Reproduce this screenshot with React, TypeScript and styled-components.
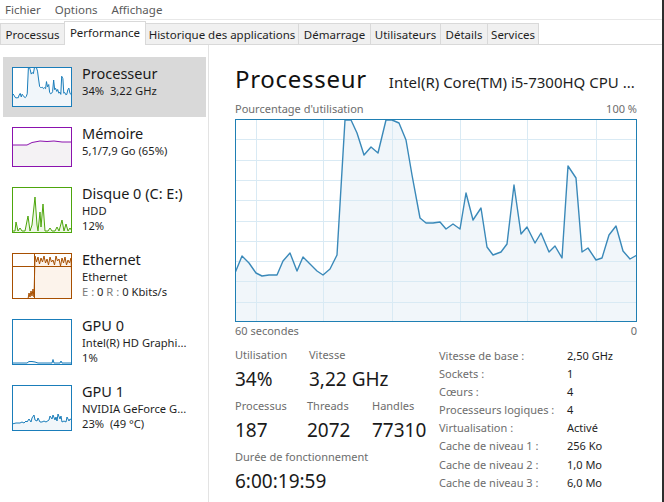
import React from "react";
import styled, { createGlobalStyle } from "styled-components";

const GlobalStyle = createGlobalStyle`
  html, body { margin: 0; padding: 0; background: #fff; }
  body { font-family: "Segoe UI", "Noto Sans", sans-serif; color: #1e1e1e; }
`;

const Window = styled.div`
  width: 664px;
  height: 502px;
  box-sizing: border-box;
  border-right: 2px solid #2e2e2e;
  display: flex;
  flex-direction: column;
  overflow: hidden;
  background: #fff;
`;

const MenuBar = styled.div`
  height: 19px;
  display: flex;
  align-items: center;
  gap: 14px;
  padding-left: 5px;
  border-bottom: 1px solid #e8e8e8;
  font-size: 11.5px;
  color: #5a5a5a;
`;

const TabStrip = styled.div`
  height: 24px;
  display: flex;
  align-items: flex-end;
  border-bottom: 1px solid #d9d9d9;
`;

const Tab = styled.div<{ $w: number; $active?: boolean }>`
  width: ${(p) => p.$w}px;
  height: ${(p) => (p.$active ? 24 : 21)}px;
  margin-bottom: ${(p) => (p.$active ? -1 : 0)}px;
  margin-right: -1px;
  box-sizing: border-box;
  display: flex;
  align-items: center;
  justify-content: center;
  padding-bottom: ${(p) => (p.$active ? 2 : 0)}px;
  border: 1px solid #d9d9d9;
  border-bottom: none;
  background: ${(p) => (p.$active ? "#fff" : "#f0f0f0")};
  position: relative;
  z-index: ${(p) => (p.$active ? 1 : 0)};
  font-size: 11.5px;
  color: #1e1e1e;
  white-space: nowrap;
`;

const Body = styled.div`
  flex: 1;
  display: flex;
  min-height: 0;
`;

const Sidebar = styled.div`
  width: 209px;
  flex: none;
  box-sizing: border-box;
  border-right: 1px solid #e3e3e3;
  padding-top: 12px;
`;

const SideItem = styled.div<{ $selected?: boolean }>`
  display: flex;
  gap: 10px;
  margin: 0 2px 0 3px;
  padding: 10px 0 10px 9px;
  background: ${(p) => (p.$selected ? "#d9d9d9" : "transparent")};
`;

const SideText = styled.div`
  display: flex;
  flex-direction: column;
  margin-top: -3px;
  white-space: nowrap;
`;

const SideTitle = styled.div`
  font-size: 14.5px;
  line-height: 19px;
  color: #1a1a1a;
`;

const SideSub = styled.div`
  font-size: 11.2px;
  line-height: 15px;
  color: #1e1e1e;
`;

const Dim = styled.span`
  color: #7a7a7a;
`;

const Main = styled.div`
  flex: 1;
  padding: 19px 0 0 26px;
  display: flex;
  flex-direction: column;
`;

const Header = styled.div`
  display: flex;
  align-items: baseline;
  gap: 22px;
  width: 402px;
  height: 30px;
  margin-bottom: 8px;
  white-space: nowrap;
`;

const BigTitle = styled.div`
  font-size: 24px;
  line-height: 30px;
  letter-spacing: 0.7px;
  color: #111;
`;

const CpuName = styled.div`
  font-size: 15px;
  color: #1e1e1e;
`;

const AxisRow = styled.div`
  width: 402px;
  display: flex;
  justify-content: space-between;
  font-size: 11px;
  line-height: 14px;
  color: #6d6d6d;
`;

const ChartWrap = styled.div`
  width: 402px;
  height: 203px;
  margin: 3px 0 2px;
`;

const Stats = styled.div`
  display: flex;
  margin-top: 9px;
`;

const LeftStats = styled.div`
  width: 204px;
  display: flex;
  flex-direction: column;
  gap: 6px;
`;

const StatRow = styled.div`
  display: flex;
`;

const Stat = styled.div<{ $w?: number }>`
  width: ${(p) => (p.$w ? `${p.$w}px` : "auto")};
  display: flex;
  flex-direction: column;
  white-space: nowrap;
`;

const StatLabel = styled.div`
  font-size: 11px;
  line-height: 16px;
  color: #6d6d6d;
`;

const StatValue = styled.div`
  font-size: 19px;
  line-height: 26px;
  margin-top: 3px;
  color: #1a1a1a;
`;

const InfoTable = styled.div`
  display: grid;
  grid-template-columns: 128px auto;
  align-content: start;
  row-gap: 2.1px;
  margin-top: 1px;
  font-size: 11px;
  line-height: 16px;
`;

const InfoLabel = styled.div`
  color: #6d6d6d;
  white-space: nowrap;
`;

const InfoValue = styled.div`
  color: #1e1e1e;
`;

type Pt = [number, number];

const mainScreen: Pt[] = [
  [236, 273], [243, 256], [250, 263], [257, 273], [263, 276], [270, 275], [278, 275], [284, 261],
  [291, 253], [298, 271], [304, 257], [311, 264], [318, 271], [324, 275], [331, 269], [338, 255],
  [346, 120], [352, 120], [358, 133], [365, 155], [372, 147], [379, 153], [387, 120], [393, 120],
  [400, 123], [407, 140], [413, 175], [421, 218], [427, 223], [434, 223], [441, 222], [447, 229],
  [454, 224], [461, 229], [467, 193], [474, 220], [482, 208], [488, 247], [494, 255], [502, 252],
  [508, 244], [515, 185], [522, 234], [528, 227], [536, 243], [542, 233], [550, 252], [556, 246],
  [563, 258], [569, 166], [577, 178], [583, 252], [589, 248], [597, 260], [603, 258], [610, 235],
  [617, 226], [624, 251], [631, 259], [638, 255],
];

const mainPts: Pt[] = mainScreen.map(([x, y]) => [x - 236, y - 119]);

const cpuThumb: Pt[] = mainPts.map(([x, y]) => [(x / 402) * 60, (y / 203) * 40]);

const memThumb: Pt[] = [[0, 18], [15, 18], [20, 15.5], [28, 14], [35, 14.5], [42, 14], [50, 15], [60, 15]];

const diskThumb: Pt[] = [
  [0, 44], [3, 44], [4, 35], [6, 44], [8, 41], [10, 44], [13, 44], [16, 29], [18, 44], [20, 38],
  [23, 10], [25, 38], [26, 44], [28, 25], [29, 40], [31, 17], [33, 44], [36, 44], [38, 41], [40, 44],
  [43, 44], [45, 40], [47, 44], [50, 33], [52, 44], [54, 37], [56, 44], [58, 41], [60, 44],
];

const ethThumb: Pt[] = [
  [0, 46], [16, 46], [17, 40], [18, 44], [19, 38], [20, 43], [21, 36], [22, 44], [23, 3], [24.5, 9],
  [26, 4], [27.5, 11], [29, 5], [30.5, 9], [32, 3], [33.5, 10], [35, 6], [36.5, 12], [38, 4],
  [39.5, 9], [41, 7], [42.5, 12], [44, 3], [45.5, 8], [47, 6], [48.5, 13], [50, 5], [51.5, 10],
  [53, 4], [54.5, 12], [56, 7], [57.5, 10], [59, 5], [60, 30],
];

const gpu0Thumb: Pt[] = [
  [0, 44], [15, 44], [17, 42.5], [20, 42.5], [23, 43], [26, 44], [40, 44], [41, 40.5], [42, 44],
  [48, 44], [49, 42], [50, 44], [60, 44],
];

const gpu1Thumb: Pt[] = [
  [0, 39], [4, 38], [8, 38], [10, 37], [12, 38], [14, 36], [15, 37], [17, 34], [19, 37], [20, 33],
  [22, 30], [23, 35], [25, 36], [26, 33], [28, 37], [30, 37], [32, 36], [34, 37], [37, 35], [38, 31],
  [40, 34], [41, 30], [43, 35], [44, 32], [45, 36], [46, 29], [48, 34], [49, 31], [50, 37], [52, 36],
  [54, 37], [55, 32], [57, 36], [58, 34], [60, 35],
];

const toLine = (pts: Pt[]) => pts.map(([x, y]) => `${x},${y}`).join(" ");
const toArea = (pts: Pt[], w: number, h: number) => `0,${h} ${toLine(pts)} ${w},${h}`;

type ThumbProps = {
  pts: Pt[];
  h: number;
  stroke: string;
  fill: string;
  guides?: boolean;
};

function Thumb({ pts, h, stroke, fill, guides }: ThumbProps) {
  return (
    <svg width={60} height={h} viewBox={`0 0 60 ${h}`} style={{ flex: "none", display: "block" }}>
      <rect x={0} y={0} width={60} height={h} fill="#fff" />
      <polygon points={toArea(pts, 60, h)} fill={fill} />
      <polyline points={toLine(pts)} fill="none" stroke={stroke} strokeWidth={1} />
      {guides && (
        <>
          <line x1={0} y1={13.5} x2={60} y2={13.5} stroke={stroke} strokeWidth={1} />
          <line x1={22.5} y1={0} x2={22.5} y2={h} stroke={stroke} strokeWidth={1} />
        </>
      )}
      <rect x={0.5} y={0.5} width={59} height={h - 1} fill="none" stroke={stroke} strokeWidth={1} />
    </svg>
  );
}

function MainChart() {
  const w = 402;
  const h = 203;
  const vlines = [21, 88, 157, 225, 292, 361];
  const hlines = Array.from({ length: 9 }, (_, i) => Math.round(((i + 1) * h) / 10) + 0.5);
  return (
    <svg width={w} height={h} viewBox={`0 0 ${w} ${h}`} style={{ display: "block" }}>
      <rect x={0} y={0} width={w} height={h} fill="#fff" />
      <polygon points={toArea(mainPts, w, h)} fill="#f1f6fa" />
      {vlines.map((x) => (
        <line key={x} x1={x + 0.5} y1={0} x2={x + 0.5} y2={h} stroke="#d9eaf4" strokeWidth={1} />
      ))}
      {hlines.map((y) => (
        <line key={y} x1={0} y1={y} x2={w} y2={y} stroke="#d9eaf4" strokeWidth={1} />
      ))}
      <polyline points={toLine(mainPts)} fill="none" stroke="#3a89b9" strokeWidth={1.4} strokeLinejoin="round" />
      <rect x={0.5} y={0.5} width={w - 1} height={h - 1} fill="none" stroke="#1f7fb3" strokeWidth={1} />
    </svg>
  );
}

const tabs: { label: string; w: number }[] = [
  { label: "Processus", w: 65 },
  { label: "Performance", w: 82 },
  { label: "Historique des applications", w: 154 },
  { label: "Démarrage", w: 73 },
  { label: "Utilisateurs", w: 71 },
  { label: "Détails", w: 48 },
  { label: "Services", w: 52 },
];

const info: [string, string][] = [
  ["Vitesse de base :", "2,50 GHz"],
  ["Sockets :", "1"],
  ["Cœurs :", "4"],
  ["Processeurs logiques :", "4"],
  ["Virtualisation :", "Activé"],
  ["Cache de niveau 1 :", "256 Ko"],
  ["Cache de niveau 2 :", "1,0 Mo"],
  ["Cache de niveau 3 :", "6,0 Mo"],
];

export default function App() {
  return (
    <>
      <GlobalStyle />
      <Window>
        <MenuBar>
          <span>Fichier</span>
          <span>Options</span>
          <span>Affichage</span>
        </MenuBar>
        <TabStrip>
          {tabs.map((t) => (
            <Tab key={t.label} $w={t.w} $active={t.label === "Performance"}>
              {t.label}
            </Tab>
          ))}
        </TabStrip>
        <Body>
          <Sidebar>
            <SideItem $selected>
              <Thumb pts={cpuThumb} h={40} stroke="#1a7dba" fill="#f1f6fa" />
              <SideText>
                <SideTitle>Processeur</SideTitle>
                <SideSub>34%&nbsp; 3,22 GHz</SideSub>
              </SideText>
            </SideItem>
            <SideItem>
              <Thumb pts={memThumb} h={40} stroke="#8b12ae" fill="#f4f2f4" />
              <SideText>
                <SideTitle>Mémoire</SideTitle>
                <SideSub>5,1/7,9 Go (65%)</SideSub>
              </SideText>
            </SideItem>
            <SideItem>
              <Thumb pts={diskThumb} h={46} stroke="#4da60c" fill="#eff7e7" />
              <SideText>
                <SideTitle>Disque 0 (C: E:)</SideTitle>
                <SideSub>HDD</SideSub>
                <SideSub>12%</SideSub>
              </SideText>
            </SideItem>
            <SideItem>
              <Thumb pts={ethThumb} h={46} stroke="#a74f01" fill="#fcf3eb" guides />
              <SideText>
                <SideTitle>Ethernet</SideTitle>
                <SideSub>Ethernet</SideSub>
                <SideSub>
                  <Dim>E :</Dim> 0 <Dim>R :</Dim> 0 Kbits/s
                </SideSub>
              </SideText>
            </SideItem>
            <SideItem>
              <Thumb pts={gpu0Thumb} h={46} stroke="#1a7dba" fill="#f1f6fa" />
              <SideText>
                <SideTitle>GPU 0</SideTitle>
                <SideSub>Intel(R) HD Graphi...</SideSub>
                <SideSub>1%</SideSub>
              </SideText>
            </SideItem>
            <SideItem>
              <Thumb pts={gpu1Thumb} h={46} stroke="#1a7dba" fill="#f1f6fa" />
              <SideText>
                <SideTitle>GPU 1</SideTitle>
                <SideSub>NVIDIA GeForce G...</SideSub>
                <SideSub>23%&nbsp; (49 °C)</SideSub>
              </SideText>
            </SideItem>
          </Sidebar>
          <Main>
            <Header>
              <BigTitle>Processeur</BigTitle>
              <CpuName>Intel(R) Core(TM) i5-7300HQ CPU ...</CpuName>
            </Header>
            <AxisRow>
              <span>Pourcentage d'utilisation</span>
              <span>100 %</span>
            </AxisRow>
            <ChartWrap>
              <MainChart />
            </ChartWrap>
            <AxisRow>
              <span>60 secondes</span>
              <span>0</span>
            </AxisRow>
            <Stats>
              <LeftStats>
                <StatRow>
                  <Stat $w={74}>
                    <StatLabel>Utilisation</StatLabel>
                    <StatValue>34%</StatValue>
                  </Stat>
                  <Stat>
                    <StatLabel>Vitesse</StatLabel>
                    <StatValue>3,22 GHz</StatValue>
                  </Stat>
                </StatRow>
                <StatRow>
                  <Stat $w={72}>
                    <StatLabel>Processus</StatLabel>
                    <StatValue>187</StatValue>
                  </Stat>
                  <Stat $w={65}>
                    <StatLabel>Threads</StatLabel>
                    <StatValue>2072</StatValue>
                  </Stat>
                  <Stat>
                    <StatLabel>Handles</StatLabel>
                    <StatValue>77310</StatValue>
                  </Stat>
                </StatRow>
                <StatRow>
                  <Stat>
                    <StatLabel>Durée de fonctionnement</StatLabel>
                    <StatValue>6:00:19:59</StatValue>
                  </Stat>
                </StatRow>
              </LeftStats>
              <InfoTable>
                {info.map(([k, v]) => (
                  <React.Fragment key={k}>
                    <InfoLabel>{k}</InfoLabel>
                    <InfoValue>{v}</InfoValue>
                  </React.Fragment>
                ))}
              </InfoTable>
            </Stats>
          </Main>
        </Body>
      </Window>
    </>
  );
}
